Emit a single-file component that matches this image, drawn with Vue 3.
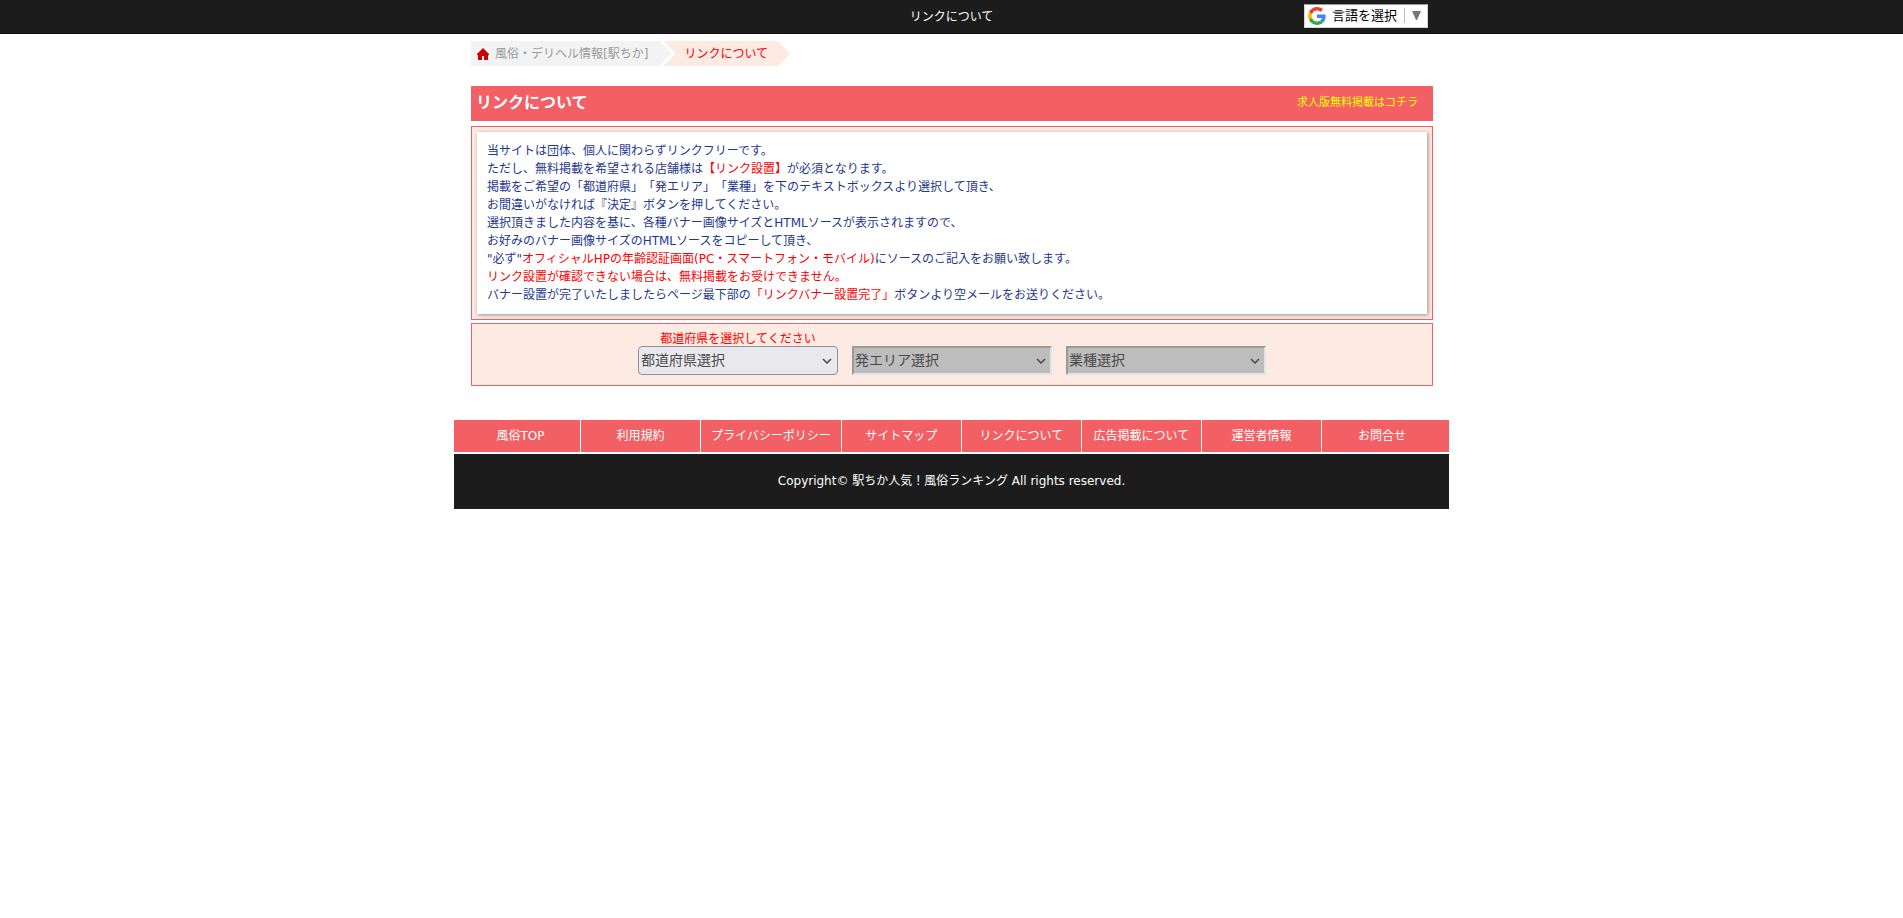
<script setup>
import { ref } from 'vue'

const prefecture = ref('')

const footerLinks = [
  '風俗TOP',
  '利用規約',
  'プライバシーポリシー',
  'サイトマップ',
  'リンクについて',
  '広告掲載について',
  '運営者情報',
  'お問合せ',
]
</script>

<template>
  <div class="page">
    <header class="topbar">
      <div class="topbar-inner">
        <span></span>
        <p class="topbar-title">リンクについて</p>
        <button class="translate" type="button">
          <svg class="g-logo" viewBox="0 0 48 48" aria-hidden="true">
            <path fill="#ea4335" d="M24 9.5c3.54 0 6.71 1.22 9.21 3.6l6.85-6.85C35.9 2.38 30.47 0 24 0 14.62 0 6.51 5.38 2.56 13.22l7.98 6.19C12.43 13.72 17.74 9.5 24 9.5z" />
            <path fill="#4285f4" d="M46.98 24.55c0-1.57-.15-3.09-.38-4.55H24v9.02h12.94c-.58 2.96-2.26 5.48-4.78 7.18l7.73 6c4.51-4.18 7.09-10.36 7.09-17.65z" />
            <path fill="#fbbc05" d="M10.53 28.59c-.48-1.45-.76-2.99-.76-4.59s.27-3.14.76-4.59l-7.98-6.19C.92 16.46 0 20.12 0 24c0 3.88.92 7.54 2.56 10.78l7.97-6.19z" />
            <path fill="#34a853" d="M24 48c6.48 0 11.93-2.13 15.89-5.81l-7.73-6c-2.15 1.45-4.92 2.3-8.16 2.3-6.26 0-11.57-4.22-13.47-9.91l-7.98 6.19C6.51 42.62 14.62 48 24 48z" />
          </svg>
          <span class="translate-label">言語を選択</span>
          <svg class="translate-arrow" viewBox="0 0 9 9" aria-hidden="true">
            <path fill="#767676" d="M0 0h9L5 9H4z" />
          </svg>
        </button>
      </div>
    </header>

    <div class="container">
      <main class="content">
        <nav class="crumbs" aria-label="パンくず">
          <a class="crumb crumb-home" href="#">
            <svg class="home" viewBox="0 0 12 12" aria-hidden="true">
              <path fill="#cc0000" d="M6 0l6 6v1h-1v5H7V8H5v4H1V7H0V6z" />
            </svg>
            <span>風俗・デリヘル情報[駅ちか]</span>
          </a>
          <span class="crumb crumb-current">リンクについて</span>
        </nav>

        <div class="heading">
          <h1>リンクについて</h1>
          <a href="#">求人版無料掲載はコチラ</a>
        </div>

        <section class="panel notice-panel">
          <p class="notice">
            当サイトは団体、個人に関わらずリンクフリーです。<br>
            ただし、無料掲載を希望される店舗様は<em>【リンク設置】</em>が必須となります。<br>
            掲載をご希望の「都道府県」「発エリア」「業種」を下のテキストボックスより選択して頂き、<br>
            お間違いがなければ『決定』ボタンを押してください。<br>
            選択頂きました内容を基に、各種バナー画像サイズとHTMLソースが表示されますので、<br>
            お好みのバナー画像サイズのHTMLソースをコピーして頂き、<br>
            "必ず"<em>オフィシャルHPの年齢認証画面(PC・スマートフォン・モバイル)</em>にソースのご記入をお願い致します。<br>
            <em>リンク設置が確認できない場合は、無料掲載をお受けできません。</em><br>
            バナー設置が完了いたしましたらページ最下部の<em>「リンクバナー設置完了」</em>ボタンより空メールをお送りください。
          </p>
        </section>

        <form class="panel picker">
          <div class="field">
            <label for="prefecture">都道府県を選択してください</label>
            <div class="select-wrap">
              <select id="prefecture" v-model="prefecture">
                <option value="">都道府県選択</option>
              </select>
              <svg class="chevron" viewBox="0 0 10 6" aria-hidden="true"><path d="M1 1l4 4 4-4" /></svg>
            </div>
          </div>
          <div class="field">
            <div class="select-wrap">
              <select aria-label="発エリア選択" disabled>
                <option>発エリア選択</option>
              </select>
              <svg class="chevron" viewBox="0 0 10 6" aria-hidden="true"><path d="M1 1l4 4 4-4" /></svg>
            </div>
          </div>
          <div class="field">
            <div class="select-wrap">
              <select aria-label="業種選択" disabled>
                <option>業種選択</option>
              </select>
              <svg class="chevron" viewBox="0 0 10 6" aria-hidden="true"><path d="M1 1l4 4 4-4" /></svg>
            </div>
          </div>
        </form>
      </main>

      <footer>
        <ul class="footer-nav">
          <li v-for="link in footerLinks" :key="link"><a href="#">{{ link }}</a></li>
        </ul>
        <p class="copyright">Copyright© 駅ちか人気！風俗ランキング All rights reserved.</p>
      </footer>
    </div>
  </div>
</template>

<style>
body {
  margin: 0;
  background: #fff;
}
</style>

<style scoped>
.page {
  font-family: "DejaVu Sans", "Noto Sans CJK JP", sans-serif;
  font-size: 12px;
  line-height: 18px;
  text-spacing-trim: space-all;
  color: #1e3791;
}

p, h1, ul {
  margin: 0;
  padding: 0;
}

a {
  text-decoration: none;
}

.topbar {
  background: #1c1c1c;
  border-bottom: 1px solid #111;
}

.topbar-inner,
.container {
  box-sizing: border-box;
  max-width: 995px;
  margin: 0 auto;
}

.topbar-inner {
  display: grid;
  grid-template-columns: 1fr auto 1fr;
  align-items: center;
  min-height: 33px;
}

.topbar-title {
  color: #fff;
}

.translate {
  display: flex;
  align-items: center;
  justify-self: end;
  box-sizing: border-box;
  height: 24px;
  margin: 0 21px 1px 0;
  padding: 0 6px 1px 3px;
  border: 1px solid #d5d5d5;
  border-top-color: #9b9b9b;
  background: #fff;
  color: #000;
  font: 13px/18px "DejaVu Sans", "Noto Sans CJK JP", sans-serif;
}

.g-logo {
  width: 18px;
  height: 18px;
  margin-right: 6px;
}

.translate-label {
  padding-right: 7px;
  border-right: 1px solid #bbb;
  line-height: 15px;
}

.translate-arrow {
  width: 9px;
  height: 9px;
  margin-left: 7px;
}

.content {
  padding: 7px 16px 34px 17px;
}

.crumbs {
  display: flex;
  margin-bottom: 20px;
}

.crumb {
  display: flex;
  align-items: center;
  height: 25px;
}

.crumb-home {
  gap: 6px;
  padding: 0 23px 0 6px;
  background: #f3f3f3;
  color: #999;
  clip-path: polygon(0 0, calc(100% - 12px) 0, 100% 50%, calc(100% - 12px) 100%, 0 100%);
}

.home {
  width: 12px;
  height: 12px;
}

.crumb-current {
  margin-left: -8px;
  padding: 0 22px 0 21px;
  background: #fdeae2;
  color: #f00;
  clip-path: polygon(0 0, calc(100% - 12px) 0, 100% 50%, calc(100% - 12px) 100%, 0 100%, 12px 50%);
}

.heading {
  display: flex;
  align-items: center;
  justify-content: space-between;
  box-sizing: border-box;
  min-height: 35px;
  margin-bottom: 5px;
  padding: 0 15px 2px 5px;
  background: #f26065;
}

.heading h1 {
  color: #fff;
  font-size: 16px;
  line-height: 24px;
}

.heading a {
  color: #ff0;
  font-size: 11px;
}

.panel {
  border: 1px solid #f26065;
  background: #fdeae2;
}

.notice-panel {
  margin-bottom: 3px;
  padding: 5px;
}

.notice {
  padding: 10px;
  background: #fff;
  box-shadow: 1px 1px 4px rgba(0, 0, 0, 0.4);
}

.notice em {
  color: #f00;
  font-style: normal;
}

.picker {
  display: flex;
  flex-wrap: wrap;
  justify-content: center;
  align-items: flex-end;
  gap: 14px;
  padding: 9px 0 10px;
}

.field {
  display: flex;
  flex-direction: column;
  width: 200px;
}

.field label {
  color: #f00;
  line-height: 13px;
  text-align: center;
}

.select-wrap {
  position: relative;
}

select {
  display: block;
  box-sizing: border-box;
  width: 100%;
  height: 29px;
  padding: 0 24px 2px 2px;
  appearance: none;
  border: 1px solid #8f8f9d;
  border-radius: 4px;
  background: #e9e9ed;
  color: #494949;
  font: 14px/20px "DejaVu Sans", "Noto Sans CJK JP", sans-serif;
}

select:disabled {
  padding-left: 1px;
  border: 2px solid;
  border-color: #999 #e3e3e3 #e3e3e3 #999;
  border-radius: 0;
  background: #bdbdbd;
  opacity: 1;
}

.chevron {
  position: absolute;
  top: 12px;
  right: 6px;
  width: 10px;
  height: 6px;
  fill: none;
  stroke: #494949;
  stroke-width: 1.5;
  pointer-events: none;
}

.footer-nav {
  display: flex;
  margin-bottom: 2px;
  padding: 0 7px;
  background: #f26065;
  list-style: none;
}

.footer-nav li {
  flex: 1 1 auto;
  box-sizing: border-box;
  width: 120px;
  min-width: max-content;
  padding: 7px 10px;
  border-right: 1px solid #fff;
  text-align: center;
}

.footer-nav li:last-child {
  border-right: 0;
}

.footer-nav a {
  color: #fff;
}

.copyright {
  padding: 18px 10px 19px;
  background: #1c1c1c;
  color: #fff;
  text-align: center;
}
</style>
